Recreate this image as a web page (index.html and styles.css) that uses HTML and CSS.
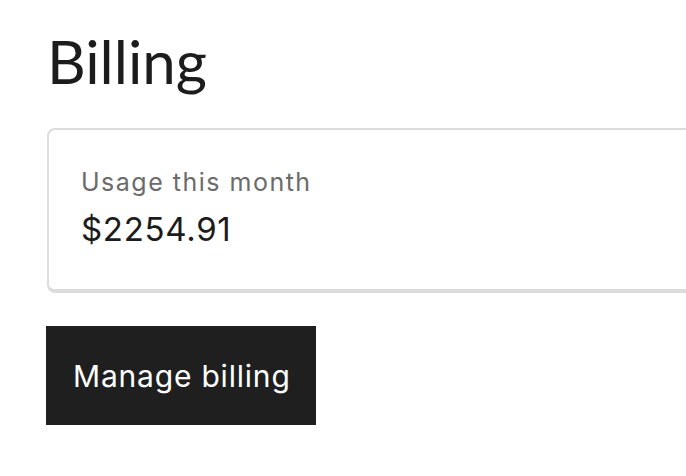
FILE: index.html
```html
<!DOCTYPE html>
<html>
<head>
<meta charset="utf-8">
<link rel="stylesheet" href="styles.css">
</head>
<body>
<main class="page">
  <h1 class="title">Billing</h1>
  <section class="card">
    <div class="label">Usage this month</div>
    <div class="amount">$2254.91</div>
  </section>
  <button class="btn">Manage billing</button>
</main>
</body>
</html>
```
FILE: styles.css
```css
html, body {
  margin: 0;
  padding: 0;
  overflow: hidden;
  background: #fff;
}
.page {
  padding: 19px 0 0 47px;
  display: flex;
  flex-direction: column;
  align-items: flex-start;
}
.title {
  margin: 0;
  font-family: Lato, "Noto Sans", sans-serif;
  font-weight: 400;
  font-size: 60px;
  line-height: 84px;
  color: #1c1c1c;
}
.card {
  margin-top: 25px;
  box-sizing: border-box;
  width: 720px;
  height: 165px;
  border: 2px solid #dcdcdc;
  border-bottom-width: 4px;
  border-radius: 8px;
  padding: 37px 32px;
  display: flex;
  flex-direction: column;
  gap: 12px;
}
.label {
  font-family: Inter, sans-serif;
  font-size: 25px;
  line-height: 30px;
  letter-spacing: 1.5px;
  color: #6b6b6b;
}
.amount {
  font-family: Inter, sans-serif;
  font-size: 33px;
  line-height: 40px;
  letter-spacing: 0.7px;
  color: #1c1c1c;
}
.btn {
  margin-top: 33px;
  margin-left: -1px;
  width: 270px;
  height: 99px;
  border: none;
  border-radius: 0;
  background: #1f1f1f;
  color: #fff;
  font-family: Inter, sans-serif;
  font-size: 30px;
  letter-spacing: 0.8px;
  white-space: nowrap;
  padding: 0 0 0 27px;
  text-align: left;
}
```
